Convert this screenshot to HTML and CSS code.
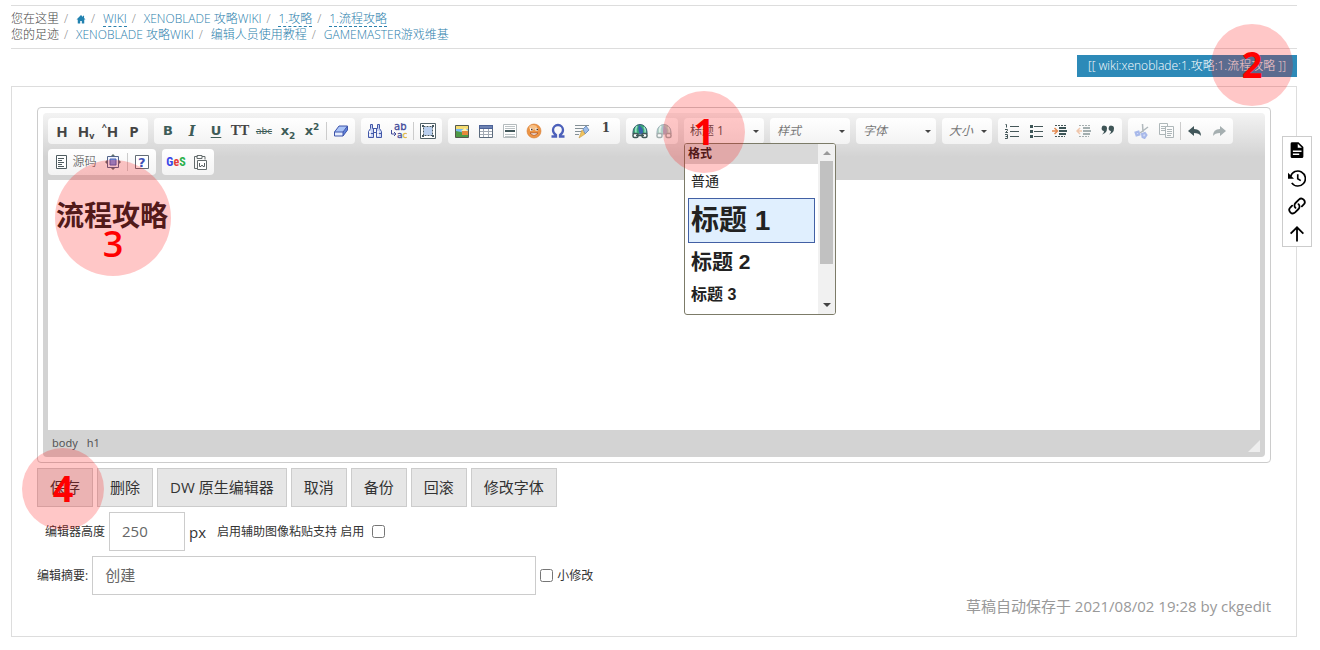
FILE: index.html
```html
<!DOCTYPE html>
<html lang="zh-CN">
<head>
<meta charset="utf-8">
<meta name="viewport" content="width=device-width, initial-scale=1">
<title>wiki:xenoblade:1.攻略:1.流程攻略</title>
<link rel="stylesheet" href="styles.css">
</head>
<body>
<div class="page">
  <nav class="crumbs">
    <div class="crumb-row"><span>您在这里</span><i>/</i><a href="#" aria-label="首页"><svg class="home" viewBox="0 0 10 10"><path d="M5 0 0 5h1.4v4.5h2.7V6.6h1.8v2.9h2.7V5H10L8.4 3.4V.8H7.2v1.4z"/></svg></a><i>/</i><a class="missing" href="#">WIKI</a><i>/</i><a href="#">XENOBLADE 攻略WIKI</a><i>/</i><a class="missing" href="#">1.攻略</a><i>/</i><a class="missing" href="#">1.流程攻略</a></div>
    <div class="crumb-row"><span>您的足迹</span><i>/</i><a href="#">XENOBLADE 攻略WIKI</a><i>/</i><a href="#">编辑人员使用教程</a><i>/</i><a href="#">GAMEMASTER游戏维基</a></div>
  </nav>

  <div class="page-id"><span class="id-label">[[ wiki:xenoblade:1.攻略:1.流程攻略 ]]</span><b class="marker marker-2">2</b></div>

  <main class="content">
    <div class="editor">
      <div class="editor-inner">
        <div class="toolbar">
          <div class="group">
            <button class="tool txt" type="button">H</button>
            <button class="tool txt" type="button">H<small class="low">v</small></button>
            <button class="tool txt" type="button"><small class="high">^</small>H</button>
            <button class="tool txt" type="button">P</button>
          </div>
          <div class="group green">
            <button class="tool bold" type="button">B</button>
            <button class="tool italic" type="button">I</button>
            <button class="tool under" type="button">U</button>
            <button class="tool mono" type="button">TT</button>
            <button class="tool strike" type="button">abc</button>
            <button class="tool script" type="button">x<small class="low">2</small></button>
            <button class="tool script" type="button">x<small class="high">2</small></button>
            <span class="sep"></span>
            <button class="tool" type="button" aria-label="清除格式"><svg viewBox="0 0 16 16"><path d="M6 3h8.5L10 9H1.5z" fill="#a9c3f7"/><path d="M1.500 9H10v4H1.500z" fill="#e4ecfd"/><path d="M10 9l4.500-6v4L10 13z" fill="#5f83dc"/><path d="M6 3h8.500v4L10 13H1.500V9zM1.500 9H10l4.500-6M10 9v4" fill="none" stroke="#3f55aa"/></svg></button>
          </div>
          <div class="group">
            <button class="tool" type="button" aria-label="查找"><svg viewBox="0 0 16 16"><path d="M3.500 1.500h2v4h5v-4h2v4l2 3v6h-5v-5h-3v5h-5v-6l2-3zM6.500 5.500v4h3v-4M1.500 10.500h5m3 0h5" fill="#c8d3f4" stroke="#4358a8"/><path d="M3 8v5m8-5v5" stroke="#fff" stroke-width="1.500"/></svg></button>
            <button class="tool" type="button" aria-label="替换"><svg viewBox="0 0 16 16"><text x="3" y="7" font-family="DejaVu Sans" font-size="10" fill="#434b9a" stroke="#434b9a" stroke-width=".3">ab</text><text x="6" y="15" font-family="DejaVu Sans" font-size="9" fill="#434b9a" stroke="#434b9a" stroke-width=".3">a<tspan fill="#e1b641" stroke="#e1b641">c</tspan></text><path d="M.5 7v4h4M3 9l2 2-2 2" fill="none" stroke="#434b9a"/></svg></button>
            <span class="sep"></span>
            <button class="tool" type="button" aria-label="全选"><svg viewBox="0 0 16 16"><path d="M.5.5h15v15H.5z" fill="#fff" stroke="#526269"/><path d="M4 4h8v8H4z" fill="#b9cff0"/><path d="M3.500 3.500h9v9h-9z" fill="none" stroke="#475963" stroke-dasharray="2 1"/><path d="M2 2h2v2H2zm10 0h2v2h-2zM2 12h2v2H2zm10 0h2v2h-2z" fill="#475963"/></svg></button>
          </div>
          <div class="group">
            <button class="tool" type="button" aria-label="图像"><svg viewBox="0 0 16 16"><path d="M1.500 2.500h13v12h-13z" fill="#76b9ee" stroke="#53584c"/><path d="M2 3h12v3H2z" fill="#f5dc71"/><path d="M2 8l5 1 7 3v2H2z" fill="#4e9a45"/><path d="M8 8h6v4H8z" fill="#e4883a"/><path d="M7 8l4-3 3 3z" fill="#fff1b0"/></svg></button>
            <button class="tool" type="button" aria-label="表格"><svg viewBox="0 0 16 16"><path d="M1.500 2.500h13v12h-13z" fill="#fff" stroke="#5c6b7d"/><path d="M1 2h14v4H1z" fill="#4c6297"/><path d="M2 4h12" stroke="#90a4cf"/><path d="M5.500 6v8m5-8v8M2 8.500h12m-12 3h12" stroke="#a3aab4"/></svg></button>
            <button class="tool" type="button" aria-label="水平线"><svg viewBox="0 0 16 16"><path d="M1.500 1.500h13v13h-13z" fill="#fff" stroke="#b4bbbd"/><path d="M3 3.500h10m-10 2h10m-10 6h10m-10 2h10" stroke="#bcc3c5"/><path d="M3 8h10" stroke="#42575a" stroke-width="2"/></svg></button>
            <button class="tool" type="button" aria-label="表情"><svg viewBox="0 0 16 16"><circle cx="8" cy="8" r="7" fill="#ec9444" stroke="#d6782d" stroke-width=".6"/><ellipse cx="7" cy="4.500" rx="4" ry="2.500" fill="#f8c187"/><path d="M4 6.500h2.500m3 0H12" stroke="#fff" stroke-width="2.500"/><path d="M5 6.500h1.500m4 0H12" stroke="#483327" stroke-width="1.500"/><path d="M4 10q4 4.500 8 0z" fill="#fff" stroke="#a24920" stroke-width=".7"/></svg></button>
            <button class="tool" type="button" aria-label="特殊符号"><svg viewBox="0 0 16 16"><path d="M1.500 13.500H6V12Q3 10 3 7a5 5 0 0 1 10 0q0 3-3 5v1.500h4.500" fill="none" stroke="#4c60ba" stroke-width="2.300"/></svg></button>
            <button class="tool" type="button" aria-label="签名"><svg viewBox="0 0 16 16"><path d="M1 2.500h14m-14 3h9m-9 3h7m-7 3h4" stroke="#849096"/><path d="M9 6l3-3 3 4-4 4z" fill="#9dbce9" stroke="#7092c1"/><path d="M8 7l3 4-6 4z" fill="#f1c45d" stroke="#c69a44" stroke-width=".6"/></svg></button>
            <button class="tool note" type="button">1</button>
          </div>
          <div class="group">
            <button class="tool" type="button" aria-label="链接"><svg viewBox="0 0 16 16"><path d="M1 9a7 7.500 0 0 1 14 0v2H1z" fill="#3bab78" stroke="#365a70"/><path d="M7 2q5 3 4 9H8Q5 6 7 2z" fill="#3763a9"/><path d="M5 3q-2 3-1 7m8-6q2 3 1 6" fill="none" stroke="#9be2c5" stroke-width="1.500"/><rect x="1" y="10.500" width="5" height="4" rx="1.500" fill="#fff" stroke="#405858" stroke-width="1.500"/><rect x="10" y="10.500" width="5" height="4" rx="1.500" fill="#fff" stroke="#405858" stroke-width="1.500"/><path d="M4 12.500h8" stroke="#405858" stroke-width="1.500"/></svg></button>
            <button class="tool off" type="button" aria-label="取消链接"><svg viewBox="0 0 16 16"><path d="M1 9a7 7.500 0 0 1 14 0v2H1z" fill="#5aa587" stroke="#365a70"/><path d="M7 2q5 3 4 9H8Q5 6 7 2z" fill="#506fa0"/><path d="M5 3q-2 3-1 7m8-6q2 3 1 6" fill="none" stroke="#c4e8da" stroke-width="1.500"/><rect x="1" y="10.500" width="5" height="4" rx="1.500" fill="#fff" stroke="#405858" stroke-width="1.500"/><rect x="10" y="10.500" width="5" height="4" rx="1.500" fill="#fff" stroke="#405858" stroke-width="1.500"/></svg></button>
          </div>
          <div class="combo chosen">
            <select aria-label="格式"><option>标题 1</option></select>
            <div class="menu" role="listbox" aria-label="格式">
              <div class="menu-list">
                <div class="menu-title">格式</div>
                <div class="option normal" role="option">普通</div>
                <div class="option level-1" role="option" aria-selected="true">标题 1</div>
                <div class="option level-2" role="option">标题 2</div>
                <div class="option level-3" role="option">标题 3</div>
              </div>
              <div class="scroll"><span class="arrow-up"></span><span class="thumb"></span><span class="arrow-down"></span></div>
            </div>
            <b class="marker marker-1">1</b>
          </div>
          <div class="combo"><select aria-label="样式"><option>样式</option></select></div>
          <div class="combo"><select aria-label="字体"><option>字体</option></select></div>
          <div class="combo short"><select aria-label="大小"><option>大小</option></select></div>
          <div class="group">
            <button class="tool" type="button" aria-label="编号列表"><svg viewBox="0 0 16 16"><path d="M6 3.500h9m-9 5h9m-9 5h9M1.500 1.500h1v3M1 6.500h2.500v1L1.500 9.500H4M1 11.500h2.500v4H1m.500-2h2" fill="none" stroke="#455759"/></svg></button>
            <button class="tool" type="button" aria-label="项目列表"><svg viewBox="0 0 16 16"><path d="M6 3.500h9m-9 5h9m-9 5h9" stroke="#455759"/><path d="M2 2h3v3H2zm0 5h3v3H2zm0 5h3v3H2z" fill="#3d5557"/></svg></button>
            <button class="tool" type="button" aria-label="增加缩进"><svg viewBox="0 0 16 16"><path d="M3 2.500h12m-12 11h10" stroke="#455759" stroke-dasharray="2 1"/><path d="M7 5h7M7 8h8M7 11h7" stroke="#3d5557" stroke-width="2"/><path d="M0 8h5M2.500 5l3 3-3 3" fill="none" stroke="#e48b52" stroke-width="1.500"/></svg></button>
            <button class="tool off" type="button" aria-label="减少缩进"><svg viewBox="0 0 16 16"><path d="M3 2.500h12m-12 11h10" stroke="#455759" stroke-dasharray="2 1"/><path d="M7 5h7M7 8h8M7 11h7" stroke="#3d5557" stroke-width="2"/><path d="M6 8H1m3-3L1 8l3 3" fill="none" stroke="#e48b52" stroke-width="1.500"/></svg></button>
            <button class="tool" type="button" aria-label="引用"><svg viewBox="0 0 16 16"><path d="M7 5.500A2.700 2.700 0 1 0 4 8q0 2-2 3.500Q7 10 7 5.500zm7 0A2.700 2.700 0 1 0 11 8q0 2-2 3.500 5-1.500 5-6z" fill="#3f5557"/></svg></button>
          </div>
          <div class="group">
            <button class="tool off" type="button" aria-label="剪切"><svg viewBox="0 0 16 16"><path d="M8.500 1L9 9m5-5l-8 6" stroke="#596b75" stroke-width="1.500"/><path d="M1.500 9.500l3-1 1 3-3 1zM8 11l3-1 1.500 2-2 3-2-1z" fill="#a9bcf4" stroke="#496fdb" stroke-width="2"/></svg></button>
            <button class="tool off" type="button" aria-label="复制"><svg viewBox="0 0 16 16"><path d="M1.500.5h8v11h-8z" fill="#fff" stroke="#53666b"/><path d="M3 3.500h5m-5 2h5m-5 2h5" stroke="#53666b"/><path d="M7.500 3.500h8v11h-8z" fill="#fff" stroke="#53666b"/><path d="M9 6.500h5m-5 2h5m-5 2h5m-5 2h4" stroke="#53666b"/></svg></button>
            <span class="sep"></span>
            <button class="tool" type="button" aria-label="撤消"><svg viewBox="0 0 16 16"><path d="M7 3v3q7 0 7 7-2-3-7-3v3L1 8z" fill="#41565a"/></svg></button>
            <button class="tool off" type="button" aria-label="重做"><svg viewBox="0 0 16 16"><path d="M9 3v3q-7 0-7 7 2-3 7-3v3l6-5z" fill="#41565a"/></svg></button>
          </div>
          <div class="group">
            <button class="tool source" type="button"><svg viewBox="0 0 16 16"><path d="M2.500 1.500h10v13h-10z" fill="#fff" stroke="#4f5c60"/><path d="M4 4.500h6m-6 2h4m-4 2h6m-6 2h4m-4 2h6" stroke="#4f5c60"/></svg>源码</button>
            <button class="tool" type="button" aria-label="全屏"><svg viewBox="0 0 16 16"><path d="M5 3l3-3 3 3M5 13l3 3 3-3M3 5L0 8l3 3m10-6l3 3-3 3" fill="#60706f"/><path d="M2.500 2.500h11v11h-11z" fill="#f1f3fc" stroke="#53648a"/><path d="M5 5h6v6H5z" fill="#8198e6" stroke="#4b62b5"/></svg></button>
            <span class="sep"></span>
            <button class="tool" type="button" aria-label="关于"><svg viewBox="0 0 16 16"><path d="M1.500 1.500h13v13h-13z" fill="#fff" stroke="#626c76"/><text x="4" y="13" font-family="DejaVu Sans" font-weight="bold" font-size="13" fill="#3d50b5">?</text></svg></button>
          </div>
          <div class="group">
            <button class="tool ges" type="button"><span class="g">G</span><span class="e">e</span><span class="s">S</span></button>
            <button class="tool" type="button" aria-label="从 Word 粘贴"><svg viewBox="0 0 16 16"><path d="M5.500 2.500h-3v12h3M10 2.500h3v3M5 1.500h5v3H5z" fill="none" stroke="#646c6d"/><path d="M5.500 6.500h9v9h-9z" fill="#fff" stroke="#646c6d"/><path d="M7.500 9v3.500h1.500l1-1.500 1 1.500h1.500V9" fill="none" stroke="#585f62"/></svg></button>
          </div>
        </div>
        <div class="canvas"><article class="document" contenteditable="true" spellcheck="false"><h1>流程攻略</h1></article><b class="marker marker-3">3</b></div>
        <div class="path"><span>body</span><span>h1</span><svg class="grip" viewBox="0 0 12 12"><path d="M12 0v12H0z" fill="#eee"/></svg></div>
      </div>
    </div>

    <div class="actions">
      <button class="action" type="button">保存</button>
      <button class="action" type="button">删除</button>
      <button class="action" type="button">DW 原生编辑器</button>
      <button class="action" type="button">取消</button>
      <button class="action" type="button">备份</button>
      <button class="action" type="button">回滚</button>
      <button class="action" type="button">修改字体</button>
      <b class="marker marker-4">4</b>
    </div>
    <div class="field-row inset">
      <label for="height">编辑器高度</label>
      <input class="field height" id="height" type="text" value="250">
      <span class="unit">px</span>
      <label class="paste" for="paste">启用辅助图像粘贴支持 启用</label>
      <input class="tick" id="paste" type="checkbox">
    </div>
    <div class="field-row">
      <label for="summary">编辑摘要:</label>
      <input class="field summary" id="summary" type="text" value="创建">
      <input class="tick" id="minor" type="checkbox">
      <label for="minor">小修改</label>
    </div>
    <p class="draft">草稿自动保存于 2021/08/02 19:28 by ckgedit</p>
  </main>
</div>

<aside class="side">
  <a href="#" aria-label="显示页面"><svg viewBox="0 0 24 24"><path d="M13 9h5.500L13 3.500zM5 1.500h9l6.500 6.500v12.500a2 2 0 0 1-2 2H5.500a2 2 0 0 1-2-2v-17a2 2 0 0 1 1.500-2M15 18.500v-2H6.500v2zm3-4v-2H6.500v2z"/></svg></a>
  <a href="#" aria-label="修订记录"><svg viewBox="0 0 24 24"><path d="M3.500 10A10 10 0 1 1 5 18.500M13 7v6l4 2.500" fill="none" stroke="#000" stroke-width="2.200"/><path d="M0 5v8h8z"/></svg></a>
  <a href="#" aria-label="反向链接"><svg viewBox="0 0 24 24"><path d="M10 14.500a4.500 4.500 0 0 1 0-6.500l4.500-4.500a4.600 4.600 0 0 1 6.500 6.500l-2.500 2.500M14 9.500a4.500 4.500 0 0 1 0 6.500l-4.500 4.500A4.600 4.600 0 0 1 3 14l2.500-2.500" fill="none" stroke="#000" stroke-width="2.400" stroke-linecap="round"/></svg></a>
  <a href="#" aria-label="回到顶部"><svg viewBox="0 0 24 24"><path d="M12 22V3M3.500 11.500L12 3l8.500 8.500" fill="none" stroke="#000" stroke-width="2.400"/></svg></a>
</aside>
</body>
</html>
```

FILE: styles.css
```css
* { box-sizing: border-box; }

body {
  margin: 0;
  background: #fff;
  color: #333;
  font-family: "Open Sans", "Noto Sans CJK SC", sans-serif;
  font-size: 12px;
  line-height: 16px;
}

button, input, select { font: inherit; color: inherit; margin: 0; }

.page { margin: 5px 23px 12px 11px; }

/* breadcrumbs */
.crumbs {
  border-top: 1px solid #ddd;
  border-bottom: 1px solid #ddd;
  padding: 5px 0;
  font-weight: 300;
  color: #444;
}
.crumb-row { display: flex; flex-wrap: wrap; height: 16px; }
.crumbs i { font-style: normal; color: #888; width: 17px; padding-left: 5px; }
.crumbs a { color: #2b80ac; text-decoration: none; height: 16px; }
.crumbs a.missing { border-bottom: 1px dashed #2b80ac; }
.home { display: block; width: 10px; height: 9px; margin-top: 4px; fill: #2282b0; }

/* page id */
.page-id { position: relative; display: flex; justify-content: flex-end; margin-top: 6px; }
.id-label {
  background: #2d8ab8;
  color: #fff;
  padding: 0 11px;
  font-weight: 300;
  line-height: 22px;
}

.content {
  margin-top: 9px;
  border: 1px solid #ddd;
  padding: 20px 25px 19px;
}

/* editor */
.editor { border: 1px solid #ccc; border-radius: 4px; padding: 5px; }
.editor-inner {
  border-radius: 4px;
  background: #d3d3d3 linear-gradient(#f3f3f3, #d3d3d3) no-repeat top / 100% 44px;
  padding: 5px 5px 0;
}
.toolbar { display: flex; flex-wrap: wrap; gap: 5px 6px; padding-bottom: 5px; }
.group, .combo {
  display: flex;
  align-items: center;
  height: 26px;
  border-radius: 4px;
  background: linear-gradient(#fff, #f3f3f3);
}
.group { padding: 0 2px; }
.tool {
  display: flex;
  align-items: center;
  justify-content: center;
  width: 24px;
  height: 26px;
  padding: 0;
  border: 0;
  background: none;
  color: #444;
  white-space: nowrap;
}
.tool svg { width: 16px; height: 16px; flex: none; }
.off svg { opacity: .45; }
.sep { width: 1px; height: 18px; margin: 0 2px; background: #ccc; }
.tool small { font-size: 9px; line-height: 10px; }
.tool .low { align-self: flex-end; padding-bottom: 3px; }
.tool .high { align-self: flex-start; padding-top: 4px; }
.txt { font: bold 15px/26px "Open Sans", sans-serif; }
.green .tool { color: #3e5c58; }
.bold, .under, .script { font: bold 13px/26px "DejaVu Sans", sans-serif; }
.under { text-decoration: underline; text-underline-offset: 2px; }
.italic { font: italic bold 14px/26px "DejaVu Serif", serif; }
.green .mono { font: bold 14px/26px "Liberation Serif", serif; color: #444; }
.strike { font: 9px/26px "DejaVu Sans", sans-serif; text-decoration: line-through; }
.note { font: bold 12px/20px "DejaVu Serif", serif; align-items: flex-start; }
.source { width: 51px; gap: 2px; color: #444; font-weight: 300; }
.ges { font: bold 12px/26px "Liberation Sans Narrow", "Roboto Condensed", "Open Sans Condensed", "Liberation Sans", sans-serif; }
.g { color: #3746e8; }
.e { color: #e33d3d; }
.s { color: #2bb14b; }

.combo { position: relative; width: 80px; }
.combo.short { width: 50px; }
.combo select {
  appearance: none;
  width: 100%;
  height: 26px;
  padding: 0 0 0 7px;
  border: 0;
  background: none;
  color: #777;
  font-style: italic;
}
.combo.chosen select { color: #555; font-style: normal; padding-left: 6px; }
.combo::after {
  content: "";
  position: absolute;
  right: 5px;
  top: 12px;
  border: 3px solid transparent;
  border-top-color: #444;
  border-bottom: 0;
  pointer-events: none;
}

.menu {
  position: absolute;
  z-index: 2;
  left: 0;
  top: 25px;
  width: 152px;
  height: 172px;
  display: flex;
  overflow: hidden;
  border: 1px solid #7c7b68;
  border-radius: 3px;
  background: #fff;
  color: #222;
  font-family: "Liberation Sans", "Noto Sans CJK SC", sans-serif;
}
.menu-list { flex: 1; }
.menu-title { background: #d9d9d9; font-weight: bold; line-height: 20px; padding-left: 3px; }
.option { margin-left: 3px; margin-right: 3px; padding-left: 3px; font-weight: bold; }
.normal { font-size: 14px; line-height: 34px; font-weight: normal; }
.level-1 {
  border: 1px solid #4260a4;
  background: #e0effe;
  font-size: 28px;
  line-height: 43px;
  padding-left: 2px;
}
.level-2 { font-size: 21px; line-height: 38px; }
.level-3 { font-size: 16px; line-height: 28px; }
.scroll {
  width: 17px;
  display: flex;
  flex-direction: column;
  align-items: center;
  background: #f1f1f1;
  padding: 7px 0;
}
.arrow-up, .arrow-down { border: 4px solid transparent; }
.arrow-up { border-top: 0; border-bottom-color: #999; }
.arrow-down { border-bottom: 0; border-top-color: #444; margin-top: auto; }
.thumb { width: 13px; height: 103px; margin-top: 6px; background: #c1c1c1; }

.canvas { position: relative; min-height: 250px; background: #fff; }
.document { min-height: 250px; padding: 14px 8px; outline: 0; }
.document h1 { margin: 0; font-size: 28px; line-height: 42px; color: #222; }
.path {
  display: flex;
  gap: 9px;
  padding-left: 4px;
  font: 11px/25px "Noto Sans", sans-serif;
  color: #555;
}
.grip { width: 12px; height: 12px; margin: 10px 0 5px auto; }

/* form */
.actions { position: relative; display: flex; flex-wrap: wrap; gap: 4px; margin-top: 5px; }
.action {
  height: 39px;
  padding: 0 12px 2px;
  border: 1px solid #ccc;
  background: #e6e6e6;
  color: #333;
  font-size: 15px;
}
.field-row { display: flex; align-items: center; gap: 4px; margin-top: 5px; }
.inset { padding-left: 8px; }
.field {
  height: 39px;
  padding: 0 12px 2px;
  border: 1px solid #ccc;
  background: #fff;
  color: #666;
  font-size: 15px;
}
.height { width: 76px; }
.summary { width: 444px; }
.unit { font-size: 15px; }
.paste { margin: 0 4px 0 7px; }
.tick { width: 13px; height: 13px; }
.draft { margin: 0; text-align: right; font-size: 15px; line-height: 22px; color: #999; }

/* page tools */
.side {
  position: fixed;
  right: 8px;
  top: 136px;
  width: 30px;
  display: flex;
  flex-direction: column;
  gap: 4px;
  padding-top: 1px;
  border: 1px solid #ccc;
  background: #fff;
}
.side a { display: flex; align-items: center; justify-content: center; height: 24px; }
.side svg { width: 18px; height: 18px; }

/* numbered markers */
.marker {
  position: absolute;
  z-index: 3;
  width: 82px;
  height: 82px;
  border-radius: 50%;
  background: rgba(255, 0, 0, .22);
  color: #f00;
  font: 700 36px/82px "Open Sans", sans-serif;
  text-align: center;
  pointer-events: none;
}
.marker-1 { left: -21px; top: -27px; }
.marker-2 { right: 4px; top: -31px; }
.marker-3 { left: 7px; top: -20px; width: 116px; height: 116px; font-weight: 600; line-height: 168px; }
.marker-4 { left: -15px; top: -20px; }
```
